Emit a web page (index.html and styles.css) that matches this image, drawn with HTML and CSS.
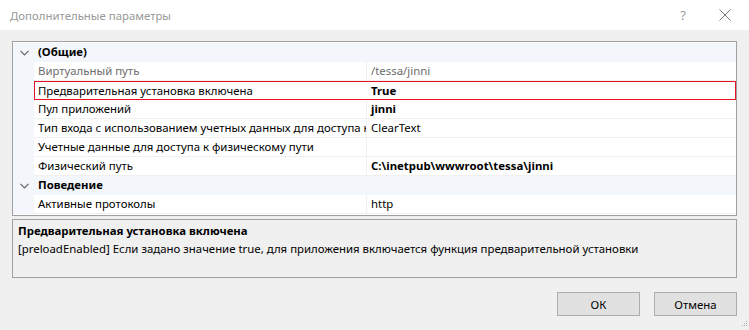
FILE: index.html
```html
<!DOCTYPE html>
<html lang="ru">
<head>
    <meta charset="UTF-8">
    <title>Дополнительные параметры</title>
    <link rel="stylesheet" href="styles.css">
</head>
<body>
    <div class="dialog">
        <div class="titlebar">
            <span class="title">Дополнительные параметры</span>
            <span class="help">?</span>
            <svg class="close" width="12" height="12" viewBox="0 0 12 12">
                <path d="M0.5 0.5 L11.5 11.5 M11.5 0.5 L0.5 11.5" stroke="#777" stroke-width="1" fill="none"/>
            </svg>
        </div>
        <div class="content">
            <div class="grid">
                <div class="row category">
                    <div class="gutter">
                        <svg width="9" height="6" viewBox="0 0 9 6"><path d="M0.5 0.8 L4.5 4.8 L8.5 0.8" stroke="#666" stroke-width="1.2" fill="none"/></svg>
                    </div>
                    <div class="cells"><div class="name">(Общие)</div></div>
                </div>
                <div class="row readonly">
                    <div class="gutter"></div>
                    <div class="cells"><div class="name">Виртуальный путь</div><div class="value">/tessa/jinni</div></div>
                </div>
                <div class="row selected">
                    <div class="gutter"></div>
                    <div class="cells"><div class="name">Предварительная установка включена</div><div class="value bold">True</div></div>
                </div>
                <div class="row">
                    <div class="gutter"></div>
                    <div class="cells"><div class="name">Пул приложений</div><div class="value bold">jinni</div></div>
                </div>
                <div class="row">
                    <div class="gutter"></div>
                    <div class="cells"><div class="name">Тип входа с использованием учетных данных для доступа к физическому пути</div><div class="value">ClearText</div></div>
                </div>
                <div class="row">
                    <div class="gutter"></div>
                    <div class="cells"><div class="name">Учетные данные для доступа к физическому пути</div><div class="value"></div></div>
                </div>
                <div class="row">
                    <div class="gutter"></div>
                    <div class="cells"><div class="name">Физический путь</div><div class="value bold">C:\inetpub\wwwroot\tessa\jinni</div></div>
                </div>
                <div class="row category">
                    <div class="gutter">
                        <svg width="9" height="6" viewBox="0 0 9 6"><path d="M0.5 0.8 L4.5 4.8 L8.5 0.8" stroke="#666" stroke-width="1.2" fill="none"/></svg>
                    </div>
                    <div class="cells"><div class="name">Поведение</div></div>
                </div>
                <div class="row">
                    <div class="gutter"></div>
                    <div class="cells"><div class="name">Активные протоколы</div><div class="value">http</div></div>
                </div>
            </div>
            <div class="description">
                <div class="desc-title">Предварительная установка включена</div>
                <div class="desc-text">[preloadEnabled] Если задано значение true, для приложения включается функция предварительной установки</div>
            </div>
            <div class="buttons">
                <button class="btn">ОК</button>
                <button class="btn">Отмена</button>
            </div>
        </div>
        <svg class="grip" width="7" height="7" viewBox="0 0 7 7">
            <rect x="5" y="0" width="1" height="1" fill="#aaa"/>
            <rect x="3" y="2" width="1" height="1" fill="#aaa"/>
            <rect x="5" y="2" width="1" height="1" fill="#aaa"/>
            <rect x="1" y="4" width="1" height="1" fill="#aaa"/>
            <rect x="3" y="4" width="1" height="1" fill="#aaa"/>
            <rect x="5" y="4" width="1" height="1" fill="#aaa"/>
        </svg>
    </div>
</body>
</html>
```

FILE: styles.css
```css
* {
    box-sizing: border-box;
}
body {
    margin: 0;
    font-family: "Segoe UI", "Noto Sans", sans-serif;
    font-size: 11.4px;
    color: #000;
    background-color: #f0f0f0;
}
.dialog {
    position: relative;
    width: 749px;
    height: 330px;
    background-color: #f0f0f0;
    overflow: hidden;
}
.titlebar {
    height: 30px;
    background-color: #fff;
    display: flex;
    align-items: center;
    padding-left: 10px;
}
.title {
    color: #999;
    flex: 1;
}
.help {
    color: #999;
    font-size: 13px;
    margin-right: 33px;
}
.close {
    margin-right: 18px;
}
.content {
    padding: 11px 12px 0 12px;
}
.grid {
    border: 1px solid #a0a0a0;
    background-color: #fff;
    padding-top: 1px;
    height: 175px;
}
.row {
    display: flex;
    height: 19px;
}
.gutter {
    width: 21px;
    background-color: #f3f6fa;
    display: flex;
    align-items: center;
    justify-content: center;
    padding-left: 1px;
}
.cells {
    flex: 1;
    display: grid;
    grid-template-columns: 332px 1fr;
    min-width: 0;
}
.name, .value {
    line-height: 18px;
    white-space: nowrap;
    overflow: hidden;
    border-bottom: 1px solid #f0f0f0;
}
.name {
    padding-left: 4px;
}
.value {
    padding-left: 4px;
    border-left: 1px solid #f0f0f0;
}
.category .cells {
    background-color: #f3f6fa;
    display: block;
}
.category .name {
    font-weight: bold;
    border-bottom: none;
}
.readonly .name, .readonly .value {
    color: #6d6d6d;
}
.selected .cells {
    border: 1px solid #e81123;
    grid-template-columns: 331px 1fr;
}
.selected .name, .selected .value {
    border-bottom: none;
    line-height: 17px;
}
.selected .name {
    padding-left: 3px;
}
.selected .value {
    border-left-color: transparent;
}
.bold {
    font-weight: bold;
}
.description {
    margin-top: 3px;
    border: 1px solid #a0a0a0;
    height: 59px;
    padding: 2px 5px;
}
.desc-title {
    font-weight: bold;
    line-height: 18px;
}
.desc-text {
    line-height: 18px;
}
.buttons {
    display: flex;
    justify-content: flex-end;
    gap: 14px;
    margin-top: 14px;
}
.btn {
    width: 83px;
    height: 24px;
    background-color: #e1e1e1;
    border: 1px solid #adadad;
    font-family: "Segoe UI", "Noto Sans", sans-serif;
    font-size: 11.4px;
    color: #000;
    padding: 0;
}
.grip {
    position: absolute;
    right: 1px;
    bottom: 2px;
}
```
